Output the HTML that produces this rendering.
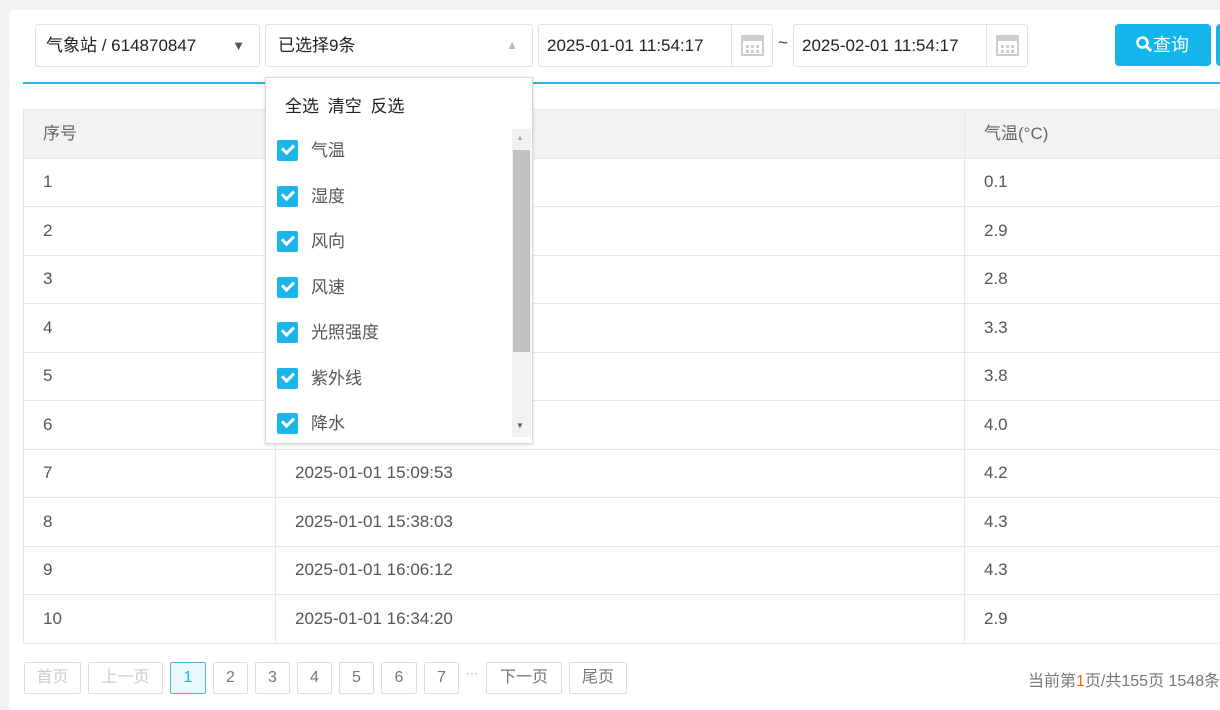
<!DOCTYPE html>
<html><head><meta charset="utf-8"><style>
*{box-sizing:border-box;margin:0;padding:0}
body{width:1220px;height:690px;overflow:hidden;background:#f1f1f1;font-family:"Liberation Sans","Noto Sans CJK SC",sans-serif;position:relative}
.card{position:absolute;left:9px;top:10px;width:1240px;height:700px;background:#fff;border-radius:4px}
.abs{position:absolute}
.inp{position:absolute;top:24px;height:43px;border:1px solid #e2e2e2;border-radius:3px;background:#fff;font-size:17px;color:#222;line-height:41px;padding-left:10px}
.cal{position:absolute;right:0;top:0;width:41px;height:41px;border-left:1px solid #e2e2e2}
.line{position:absolute;left:23px;top:82px;width:1200px;height:2px;background:#26b3e4}
table{position:absolute;left:23px;top:109px;border-collapse:collapse;font-size:17px;color:#555;table-layout:fixed;width:1262px}
td{border:1px solid #e6e6e6;height:48.5px;padding-left:19px;padding-bottom:0px}
tr.h td{background:#f2f2f2;color:#666;padding-bottom:4px}
.dd{position:absolute;left:265px;top:77px;width:268px;height:367px;background:#fff;border:1px solid #d8d8d8;box-shadow:0 1px 3px rgba(0,0,0,.15)}
.it{position:absolute;left:11px;height:22px;font-size:17px;color:#555;line-height:22px}
.cb{display:inline-block;width:21px;height:21px;background:#1ab6ea;border-radius:2px;vertical-align:top;margin-right:13px;position:relative}
.cb:after{content:"";position:absolute;left:5px;top:4px;width:9px;height:5px;border-left:3px solid #fff;border-bottom:3px solid #fff;transform:rotate(-45deg)}
.pg{position:absolute;top:662px;height:32px;border:1px solid #ddd;border-radius:2px;font-size:16px;color:#777;text-align:center;line-height:30px;background:#fff}
</style></head><body>
<div class="card"></div>
<div class="inp" style="left:35px;width:225px">气象站 / 614870847<span class="abs" style="right:14px;top:0;font-size:13px;color:#555">▼</span></div>
<div class="inp" style="left:265px;width:268px;padding-left:12px">已选择9条<span class="abs" style="right:14px;top:0;font-size:12px;color:#bbb">▲</span></div>
<div class="inp" style="left:538px;width:235px;padding-left:8px">2025-01-01 11:54:17<div class="cal"><svg width="41" height="41"><rect x="10" y="11" width="21" height="19" fill="none" stroke="#ccc" stroke-width="2"/><rect x="10" y="11" width="21" height="5" fill="#ccc"/><g fill="#ccc"><rect x="14" y="20" width="3" height="3"/><rect x="19" y="20" width="3" height="3"/><rect x="24" y="20" width="3" height="3"/><rect x="14" y="25" width="3" height="3"/><rect x="19" y="25" width="3" height="3"/><rect x="24" y="25" width="3" height="3"/></g></svg></div></div>
<div class="abs" style="left:778px;top:33px;font-size:17px;color:#333">~</div>
<div class="inp" style="left:793px;width:235px;padding-left:8px">2025-02-01 11:54:17<div class="cal"><svg width="41" height="41"><rect x="10" y="11" width="21" height="19" fill="none" stroke="#ccc" stroke-width="2"/><rect x="10" y="11" width="21" height="5" fill="#ccc"/><g fill="#ccc"><rect x="14" y="20" width="3" height="3"/><rect x="19" y="20" width="3" height="3"/><rect x="24" y="20" width="3" height="3"/><rect x="14" y="25" width="3" height="3"/><rect x="19" y="25" width="3" height="3"/><rect x="24" y="25" width="3" height="3"/></g></svg></div></div>
<div class="abs" style="left:1115px;top:24px;width:96px;height:42px;background:#13b5ea;border-radius:4px;color:#fff;font-size:18px;line-height:42px;padding-left:20px"><svg width="18" height="18" style="vertical-align:-2px"><circle cx="7.5" cy="7.5" r="5" fill="none" stroke="#fff" stroke-width="2.6"/><path d="M11 11L16 16" stroke="#fff" stroke-width="3"/></svg>查询</div>
<div class="abs" style="left:1216px;top:24px;width:20px;height:42px;background:#13b5ea;border-radius:4px"></div>
<div class="line"></div>
<table>
<colgroup><col style="width:252px"><col style="width:689px"><col style="width:321px"></colgroup>
<tr class="h"><td style="height:48px">序号</td><td></td><td>气温(°C)</td></tr>
<tr><td>1</td><td></td><td>0.1</td></tr>
<tr><td>2</td><td></td><td>2.9</td></tr>
<tr><td>3</td><td></td><td>2.8</td></tr>
<tr><td>4</td><td></td><td>3.3</td></tr>
<tr><td>5</td><td></td><td>3.8</td></tr>
<tr><td>6</td><td></td><td>4.0</td></tr>
<tr><td>7</td><td>2025-01-01 15:09:53</td><td>4.2</td></tr>
<tr><td>8</td><td>2025-01-01 15:38:03</td><td>4.3</td></tr>
<tr><td>9</td><td>2025-01-01 16:06:12</td><td>4.3</td></tr>
<tr><td>10</td><td>2025-01-01 16:34:20</td><td>2.9</td></tr>
</table>
<div class="dd">
<div class="abs" style="left:19px;top:14px;font-size:17px;color:#222;word-spacing:4px">全选 清空 反选</div>
<div class="abs" style="left:246px;top:51px;width:19px;height:308px;background:#f1f1f1"></div>
<div class="abs" style="left:247px;top:72px;width:17px;height:202px;background:#c1c1c1"></div>
<div class="abs" style="left:250px;top:55px;font-size:8px;color:#aaa">▲</div>
<div class="abs" style="left:250px;top:343px;font-size:8px;color:#555">▼</div>
<div class="it" style="top:62px"><span class="cb"></span>气温</div>
<div class="it" style="top:108px"><span class="cb"></span>湿度</div>
<div class="it" style="top:153px"><span class="cb"></span>风向</div>
<div class="it" style="top:199px"><span class="cb"></span>风速</div>
<div class="it" style="top:244px"><span class="cb"></span>光照强度</div>
<div class="it" style="top:290px"><span class="cb"></span>紫外线</div>
<div class="it" style="top:335px"><span class="cb"></span>降水</div>
</div>
<div class="pg" style="left:24px;width:57px;color:#ccc">首页</div>
<div class="pg" style="left:88px;width:75px;color:#ccc">上一页</div>
<div class="pg" style="left:170px;width:36px;border-color:#4bb7d8;background:#e8f8fd;color:#1ab6ea">1</div>
<div class="pg" style="left:213px;width:35px">2</div>
<div class="pg" style="left:255px;width:35px">3</div>
<div class="pg" style="left:297px;width:35px">4</div>
<div class="pg" style="left:339px;width:35px">5</div>
<div class="pg" style="left:381px;width:36px">6</div>
<div class="pg" style="left:424px;width:35px">7</div>
<div class="abs" style="left:466px;top:666px;font-size:12px;color:#999">···</div>
<div class="pg" style="left:486px;width:76px">下一页</div>
<div class="pg" style="left:569px;width:58px">尾页</div>
<div class="abs" style="left:1028px;top:667px;font-size:16px;color:#777;white-space:nowrap">当前第<span style="color:#f60">1</span>页/共155页 1548条</div>
</body></html>
